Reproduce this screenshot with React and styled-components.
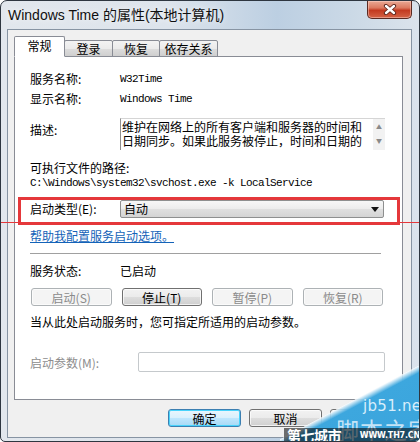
import React from "react";
import styled, { createGlobalStyle } from "styled-components";

const CJK = '"Noto Sans CJK SC", "Liberation Sans", sans-serif';
const MONO = '"Liberation Mono", "DejaVu Sans Mono", monospace';

const GlobalStyle = createGlobalStyle`
  html, body {
    margin: 0;
    padding: 0;
    background: #ffffff;
  }
  * {
    box-sizing: border-box;
  }
`;

const Window = styled.div`
  position: relative;
  width: 420px;
  height: 442px;
  display: flex;
  flex-direction: column;
  border: 1px solid #2e3640;
  border-radius: 7px 7px 5px 5px;
  background: linear-gradient(90deg, #e2e7ed 0%, #dde4ec 40%, #bccfe2 66%, #cbd9e6 84%, #dbe3ec 100%);
  overflow: hidden;
  font-family: ${CJK};
`;

const TitleBar = styled.div`
  height: 28px;
  display: flex;
  justify-content: space-between;
  align-items: flex-start;
`;

const Title = styled.div`
  padding: 5px 0 0 7px;
  font-family: "Liberation Sans", "Noto Sans CJK SC", sans-serif;
  font-size: 14px;
  line-height: 18px;
  color: #101010;
  text-shadow: 0 0 6px rgba(255, 255, 255, 0.9);
`;

const CloseButton = styled.div`
  width: 45px;
  height: 18px;
  margin-right: 7px;
  display: flex;
  align-items: center;
  justify-content: center;
  border: 1px solid #5a2a22;
  border-top: none;
  border-radius: 0 0 5px 5px;
  background: linear-gradient(180deg, #eaa994 0%, #dc7a60 40%, #c33a20 55%, #d46346 100%);
  box-shadow: inset 0 0 0 1px rgba(255, 220, 210, 0.45);
`;

const Client = styled.div`
  flex: 1;
  margin: 0 7px 3px 6px;
  padding: 6px 8px 0 6px;
  display: flex;
  flex-direction: column;
  background: #f0f0f0;
  border: 1px solid #8794a3;
`;

const TabRow = styled.div`
  display: flex;
  align-items: flex-end;
  height: 21px;
  margin-bottom: -1px;
  position: relative;
  z-index: 1;
`;

const Tab = styled.div`
  width: ${(p) => p.$w}px;
  height: ${(p) => (p.$active ? 21 : 17)}px;
  margin-left: ${(p) => (p.$first ? 0 : -1)}px;
  position: relative;
  z-index: ${(p) => (p.$active ? 2 : 1)};
  display: flex;
  align-items: center;
  justify-content: center;
  padding-bottom: ${(p) => (p.$active ? 2 : 0)}px;
  font-size: 12px;
  color: #000;
  border: 1px solid #898c95;
  border-bottom-color: ${(p) => (p.$active ? "#ffffff" : "#898c95")};
  border-radius: 2px 2px 0 0;
  background: ${(p) =>
    p.$active ? "#ffffff" : "linear-gradient(180deg, #f3f3f3 0%, #ebebeb 50%, #dddddd 51%, #cfcfcf 100%)"};
`;

const Panel = styled.div`
  display: flex;
  flex-direction: column;
  padding: 12px 17px 27px 15px;
  background: #ffffff;
  border: 1px solid #898c95;
  font-size: 12px;
  color: #000;
`;

const InfoRow = styled.div`
  display: grid;
  grid-template-columns: 90px 1fr;
  align-items: center;
  height: ${(p) => p.$h || 20}px;
  margin-top: ${(p) => p.$mt || 0}px;
  line-height: ${(p) => p.$h || 20}px;
`;

const Label = styled.div`
  font-size: 12px;
  color: ${(p) => (p.$disabled ? "#8d8d8d" : "#000")};
  white-space: nowrap;
`;

const Mono = styled.div`
  font-family: ${MONO};
  font-size: 11px;
  letter-spacing: -0.6px;
  color: #000;
  white-space: nowrap;
`;

const DescRow = styled.div`
  display: grid;
  grid-template-columns: 90px 1fr;
  align-items: start;
  margin-top: 9px;
`;

const DescLabel = styled(Label)`
  padding-top: 2px;
  line-height: 20px;
`;

const DescBox = styled.div`
  height: 32px;
  display: flex;
  border-top: 1px solid #d5d5d5;
  border-left: 1px solid #8f8f8f;
  background: #ffffff;
`;

const DescText = styled.div`
  flex: 1;
  padding: 1px 0 0 1px;
  font-size: 12px;
  line-height: 14px;
  color: #000;
  overflow: hidden;
`;

const ScrollBar = styled.div`
  width: 12px;
  display: flex;
  flex-direction: column;
  justify-content: space-between;
  align-items: center;
  padding: 4px 0 5px;
  background: #f2f2f2;
  font-size: 6px;
  line-height: 8px;
  color: #8a8a8a;
`;

const PathBlock = styled.div`
  margin-top: 10px;
  display: flex;
  flex-direction: column;
`;

const PathLabel = styled.div`
  height: 16px;
  line-height: 16px;
`;

const PathValue = styled(Mono)`
  height: 14px;
  line-height: 14px;
`;

const Highlight = styled.div`
  margin: 7px -15px 0 -12px;
  height: 28px;
  padding: 0 13px 4px 9px;
  display: grid;
  grid-template-columns: 90px 1fr;
  align-items: start;
  border: 3px solid #e5383b;
`;

const ComboLabel = styled(Label)`
  line-height: 18px;
`;

const Combo = styled.div`
  height: 18px;
  display: flex;
  align-items: center;
  justify-content: space-between;
  padding: 0 4px 0 3px;
  border: 1px solid #8e8f8f;
  border-radius: 2px;
  background: linear-gradient(180deg, #f7f7f7 0%, #ececec 50%, #dfdfdf 51%, #d4d4d4 100%);
  font-size: 12px;
  line-height: 16px;
`;

const Link = styled.a`
  display: block;
  margin-top: 3px;
  height: 16px;
  line-height: 16px;
  color: #1463b8;
  text-decoration: underline;
  font-size: 12px;
  cursor: pointer;
`;

const Separator = styled.div`
  margin: 9px 4px 0 0;
  height: 1px;
  background: #a0a0a0;
`;

const ButtonGrid = styled.div`
  margin: 7px 2px 0 1px;
  display: grid;
  grid-template-columns: repeat(4, 1fr);
  column-gap: 10px;
`;

const Button = styled.div`
  height: 18px;
  display: flex;
  align-items: center;
  justify-content: center;
  font-size: 12px;
  border: 1px solid ${(p) => (p.$disabled ? "#adb2b5" : "#707070")};
  border-radius: 3px;
  color: ${(p) => (p.$disabled ? "#8a8a8a" : "#000")};
  background: ${(p) =>
    p.$disabled
      ? "#f4f4f4"
      : "linear-gradient(180deg, #f2f2f2 0%, #ebebeb 50%, #dddddd 51%, #cfcfcf 100%)"};
  box-shadow: inset 0 0 0 1px ${(p) => (p.$disabled ? "#fbfbfb" : "rgba(255,255,255,0.7)")};
`;

const Hint = styled.div`
  margin-top: 8px;
  height: 16px;
  line-height: 16px;
  white-space: nowrap;
`;

const ParamRow = styled.div`
  margin-top: 22px;
  display: grid;
  grid-template-columns: 108px 1fr;
  align-items: center;
  height: 20px;
`;

const ParamInput = styled.div`
  height: 20px;
  border: 1px solid #c5c9cc;
  border-radius: 2px;
  background: #ffffff;
`;

const Footer = styled.div`
  margin-top: 9px;
  display: flex;
  justify-content: flex-end;
  gap: 8px;
`;

const FooterButton = styled(Button)`
  width: 73px;
  border-color: ${(p) => (p.$default ? "#3c7fb1" : "#707070")};
  background: ${(p) =>
    p.$default
      ? "linear-gradient(180deg, #eaf6fd 0%, #d9f0fc 50%, #bee6fd 51%, #a7d9f5 100%)"
      : "linear-gradient(180deg, #f2f2f2 0%, #ebebeb 50%, #dddddd 51%, #cfcfcf 100%)"};
  box-shadow: inset 0 0 0 1px ${(p) => (p.$default ? "#48d3fb" : "rgba(255,255,255,0.7)")};
`;

const RedLine = styled.div`
  position: absolute;
  left: 0;
  right: 0;
  top: 221px;
  height: 1px;
  background: #e5383b;
  z-index: 3;
`;

/* watermark stamped over the bottom-right corner of the screenshot */
const Watermark = styled.div`
  position: absolute;
  left: 279px;
  top: 365px;
  width: 141px;
  height: 77px;
  z-index: 4;
  pointer-events: none;
  background: linear-gradient(152deg, transparent 0%, transparent 48%, rgba(245, 250, 253, 0.85) 48.5%, #3da7de 53%, #3aa4dc 100%);
`;

const WmSite = styled.span`
  position: absolute;
  left: 83px;
  top: 31px;
  font-family: "DejaVu Sans", sans-serif;
  font-size: 15px;
  line-height: 18px;
  letter-spacing: 0.3px;
  color: #d8eefb;
`;

const WmName = styled.span`
  position: absolute;
  left: 56px;
  top: 50px;
  font-family: ${CJK};
  font-size: 23px;
  line-height: 26px;
  letter-spacing: 1px;
  white-space: nowrap;
  color: rgba(235, 246, 253, 0.8);
`;

const WmBanner = styled.div`
  position: absolute;
  left: 4px;
  right: 0;
  bottom: 0;
  height: 15px;
  display: flex;
  align-items: center;
  justify-content: space-between;
  padding: 0 1px 0 3px;
  background: rgba(0, 0, 0, 0.55);
  color: #ffffff;
`;

const WmCity = styled.span`
  font-family: ${CJK};
  font-size: 14px;
  font-weight: 700;
  line-height: 15px;
  letter-spacing: -0.5px;
`;

const WmUrl = styled.span`
  font-family: "DejaVu Sans", sans-serif;
  font-size: 8px;
  font-weight: 700;
  line-height: 15px;
  letter-spacing: -0.2px;
`;

function CloseGlyph() {
  return (
    <svg width="14" height="11" viewBox="0 0 14 11">
      <path d="M3 2 L11 9 M11 2 L3 9" stroke="#5b241a" strokeWidth="4.2" strokeLinecap="round" />
      <path d="M3 2 L11 9 M11 2 L3 9" stroke="#ffffff" strokeWidth="2.4" strokeLinecap="round" />
    </svg>
  );
}

function DropArrow() {
  return (
    <svg width="8" height="5" viewBox="0 0 8 5">
      <path d="M0 0 L8 0 L4 5 Z" fill="#111" />
    </svg>
  );
}

const tabs = [
  { label: "常规", w: 51, active: true },
  { label: "登录", w: 49 },
  { label: "恢复", w: 48 },
  { label: "依存关系", w: 59 },
];

const controls = [
  { label: "启动(S)", disabled: true },
  { label: "停止(T)" },
  { label: "暂停(P)", disabled: true },
  { label: "恢复(R)", disabled: true },
];

export default function App() {
  return (
    <>
      <GlobalStyle />
      <Window>
        <TitleBar>
          <Title>Windows Time 的属性(本地计算机)</Title>
          <CloseButton>
            <CloseGlyph />
          </CloseButton>
        </TitleBar>
        <Client>
          <TabRow>
            {tabs.map((t, i) => (
              <Tab key={t.label} $w={t.w} $active={t.active} $first={i === 0}>
                {t.label}
              </Tab>
            ))}
          </TabRow>
          <Panel>
            <InfoRow>
              <Label>服务名称:</Label>
              <Mono>W32Time</Mono>
            </InfoRow>
            <InfoRow>
              <Label>显示名称:</Label>
              <Mono>Windows Time</Mono>
            </InfoRow>
            <DescRow>
              <DescLabel>描述:</DescLabel>
              <DescBox>
                <DescText>
                  维护在网络上的所有客户端和服务器的时间和
                  <br />
                  日期同步。如果此服务被停止，时间和日期的
                </DescText>
                <ScrollBar>
                  <span>▲</span>
                  <span>▼</span>
                </ScrollBar>
              </DescBox>
            </DescRow>
            <PathBlock>
              <PathLabel>可执行文件的路径:</PathLabel>
              <PathValue>C:\Windows\system32\svchost.exe -k LocalService</PathValue>
            </PathBlock>
            <Highlight>
              <ComboLabel>启动类型(E):</ComboLabel>
              <Combo>
                <span>自动</span>
                <DropArrow />
              </Combo>
            </Highlight>
            <Link>帮助我配置服务启动选项。</Link>
            <Separator />
            <InfoRow $mt={7}>
              <Label>服务状态:</Label>
              <Label>已启动</Label>
            </InfoRow>
            <ButtonGrid>
              {controls.map((c) => (
                <Button key={c.label} $disabled={c.disabled}>
                  {c.label}
                </Button>
              ))}
            </ButtonGrid>
            <Hint>当从此处启动服务时，您可指定所适用的启动参数。</Hint>
            <ParamRow>
              <Label $disabled>启动参数(M):</Label>
              <ParamInput />
            </ParamRow>
          </Panel>
          <Footer>
            <FooterButton $default>确定</FooterButton>
            <FooterButton>取消</FooterButton>
            <FooterButton>应用(A)</FooterButton>
          </Footer>
        </Client>
        <RedLine />
        <Watermark>
          <WmSite>jb51.net</WmSite>
          <WmName>脚本之家</WmName>
          <WmBanner>
            <WmCity>第七城市</WmCity>
            <WmUrl>WWW.TH7.CN</WmUrl>
          </WmBanner>
        </Watermark>
      </Window>
    </>
  );
}
